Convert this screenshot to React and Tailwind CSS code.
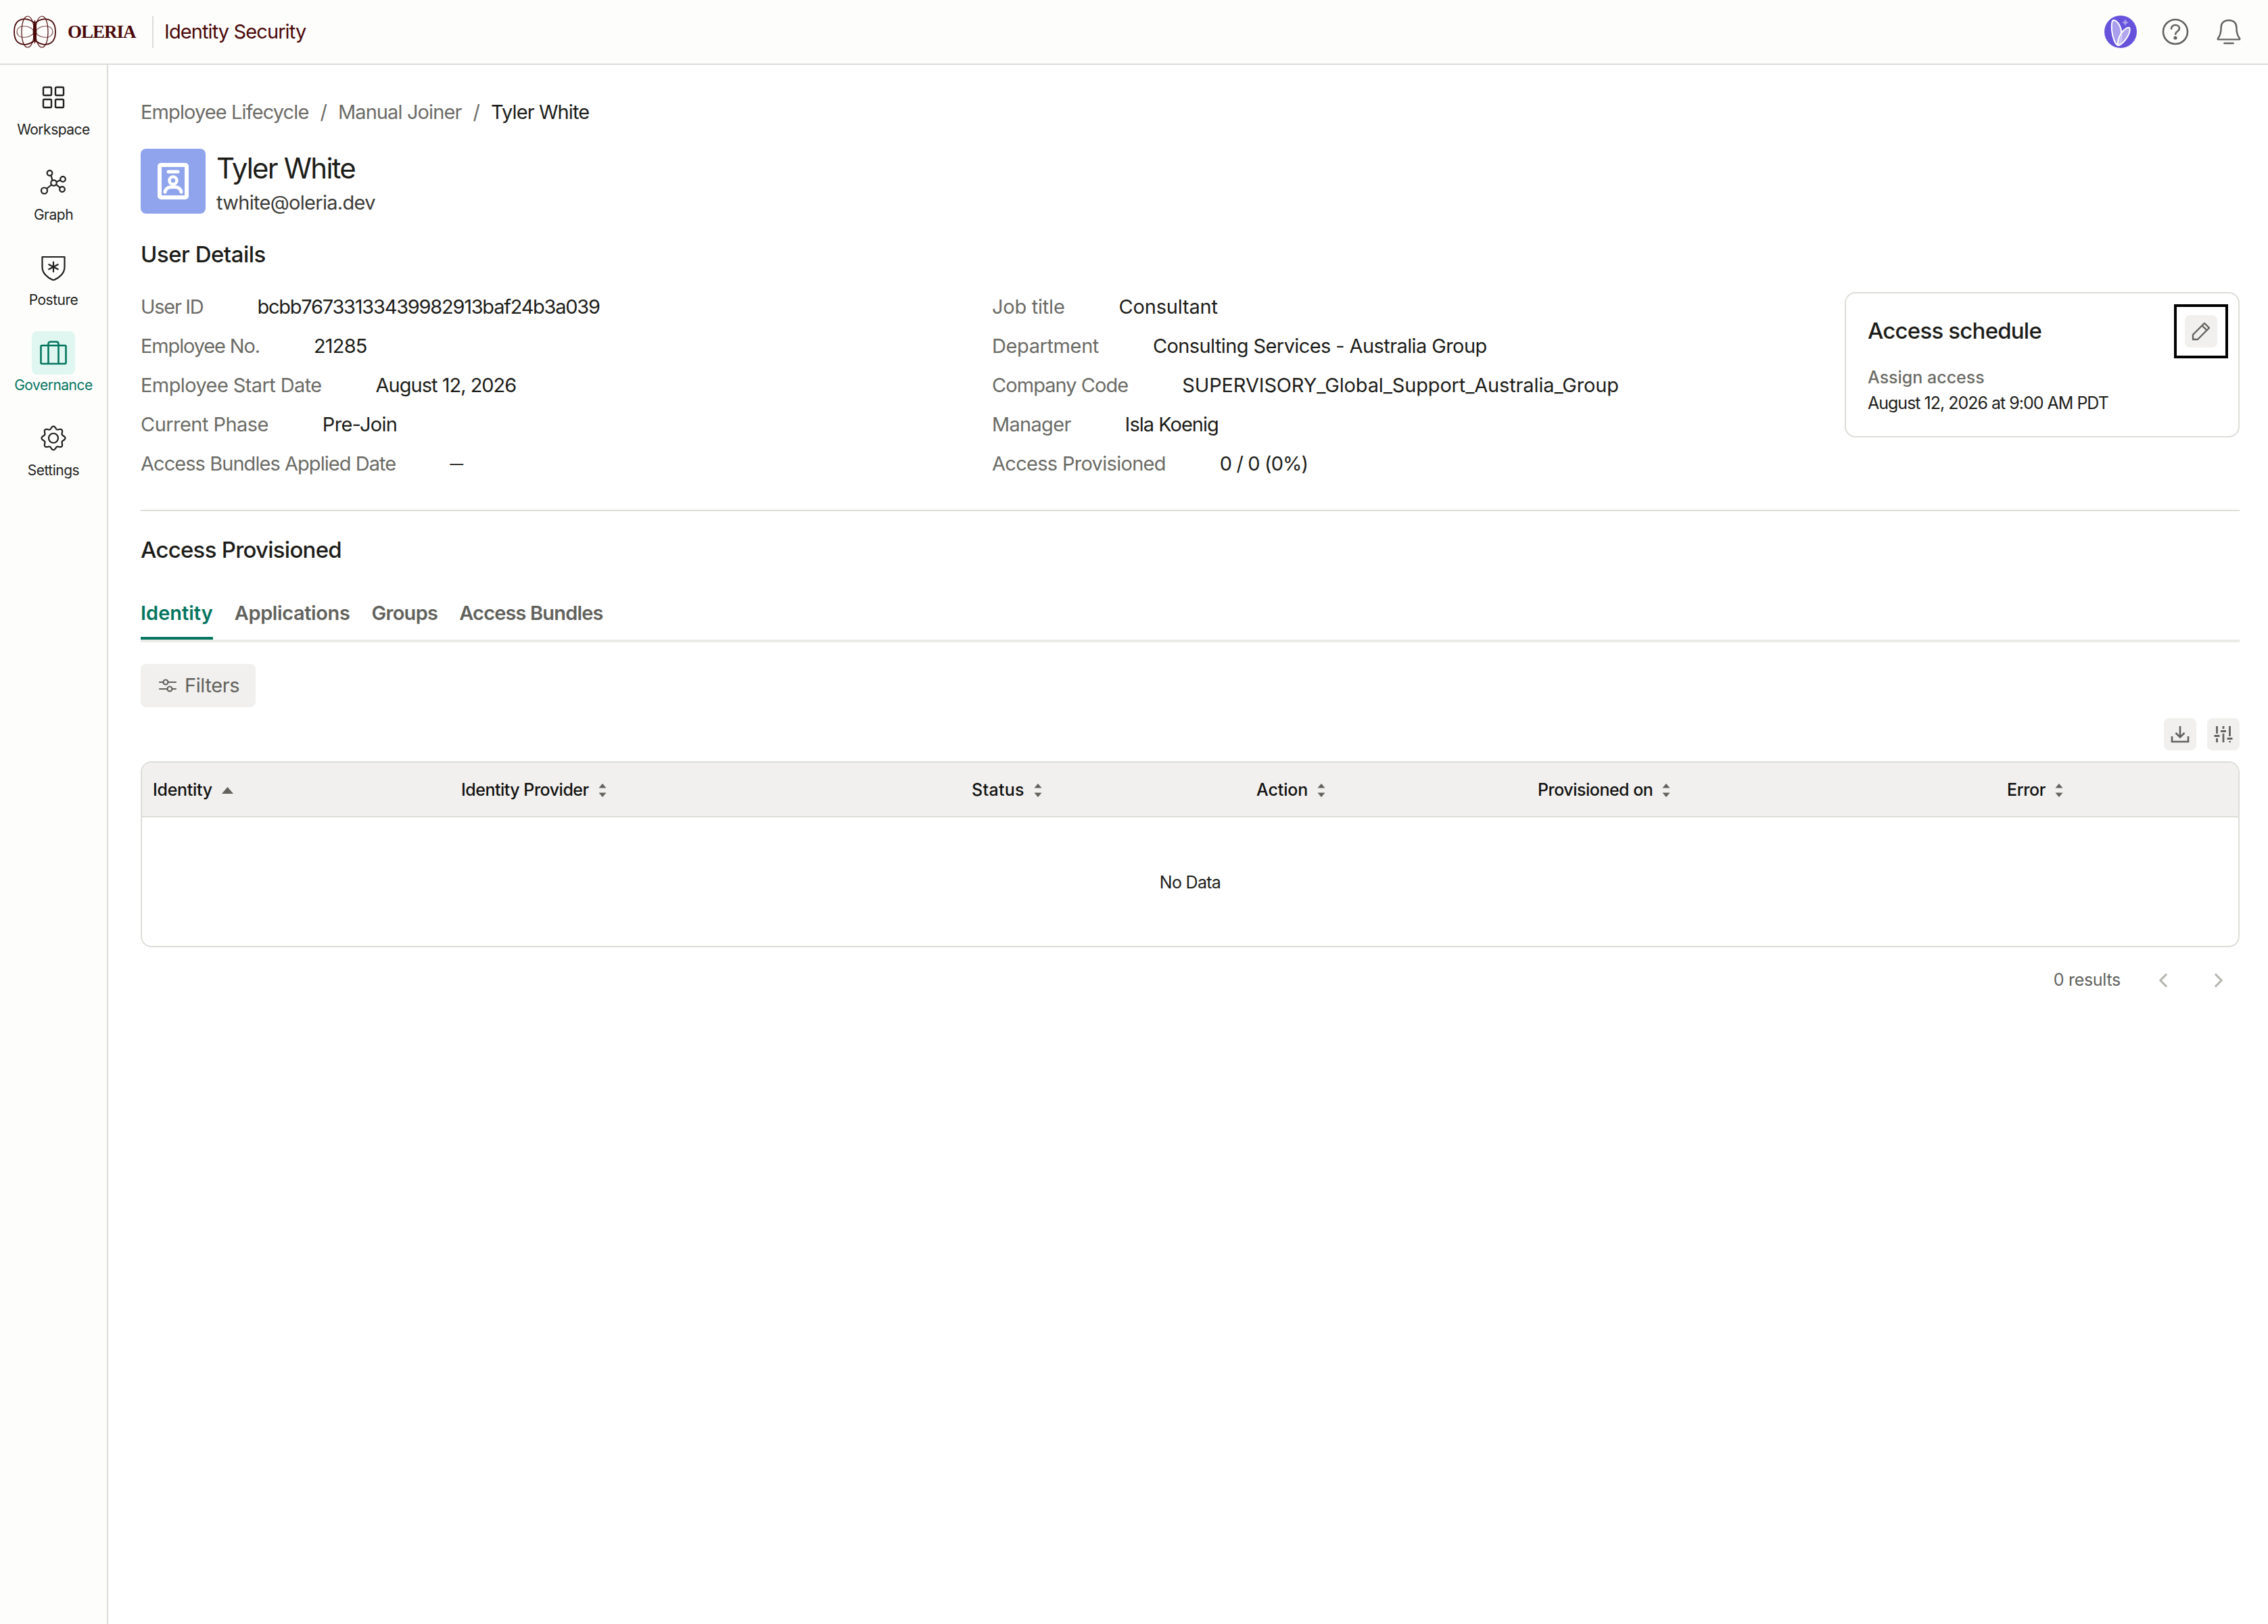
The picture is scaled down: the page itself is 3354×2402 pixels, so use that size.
import React from 'react';
import { ChevronLeft, ChevronRight } from 'lucide-react';

const gearPath = (() => {
  const pts = [];
  for (let i = 0; i < 96; i++) {
    const t = (i / 96) * Math.PI * 2;
    const r = 15.6 + 1.9 * Math.cos(8 * t);
    pts.push(`${(19 + r * Math.sin(t)).toFixed(2)} ${(19 - r * Math.cos(t)).toFixed(2)}`);
  }
  return `M${pts.join('L')}Z`;
})();

const LogoLobes = () => (
  <>
    <path d="M31 11C24 5 14 3 7 8C-1 14 -1 34 7 40C14 45 24 43 31 37" strokeWidth="1.800" />
    <path d="M31 24C30 10 26 1 21 1C15 1 12 12 12 24C12 36 15 47 21 47C26 47 30 38 31 24" />
    <path d="M31 24C27 17 19 15 12 16C7 17 5 21 5 24C5 27 7 31 12 32C19 33 27 31 31 24" opacity="0.75" />
  </>
);

const Logo = () => (
  <svg width="63" height="48" viewBox="0 0 63 48" fill="none" stroke="#4a0808" strokeWidth="1.200">
    <LogoLobes />
    <g transform="matrix(-1 0 0 1 63 0)">
      <LogoLobes />
    </g>
    <path d="M31.500 8C28.500 17 28.500 31 31.500 40C34.500 31 34.500 17 31.500 8Z" fill="#4a0808" />
  </svg>
);

const AiBadge = () => (
  <svg width="48" height="48" viewBox="0 0 48 48">
    <circle cx="24" cy="24" r="24" fill="#6553dc" />
    <path d="M13 7C18 6 24 14 25 23C26 32 25 41 21 44C16 44 12 32 11 22C10.500 15 11 8 13 7Z" fill="#a99fec" stroke="#fff" strokeWidth="2" />
    <path d="M37 18C39 22 36 30 31 36C27 41 22 45 20.500 44C19 40 21 32 25 26C29 21 34 17 37 18Z" fill="#c4bcf3" fillOpacity="0.8" stroke="#fff" strokeWidth="2" />
    <path d="M31 4C31.600 8 33 9.500 36.500 10.200C33 11 31.600 12.500 31 16C30.400 12.500 29 11 25.500 10.200C29 9.500 30.400 8 31 4Z" fill="#a99fec" />
  </svg>
);

const HelpIcon = () => (
  <svg width="40" height="40" viewBox="0 0 40 40" fill="none" stroke="#62625d" strokeWidth="2.600" strokeLinecap="round">
    <circle cx="20" cy="20" r="18" />
    <path d="M14 15.500C14 12 16.800 10 20 10C23.400 10 26 12.200 26 15.200C26 19 20.200 19.500 20.200 23.500" />
    <circle cx="20" cy="29" r="1.300" fill="#62625d" />
  </svg>
);

const BellIcon = () => (
  <svg width="36" height="40" viewBox="0 0 38 40" fill="none" stroke="#62625d" strokeWidth="2.600" strokeLinecap="round" strokeLinejoin="round">
    <path d="M7 13C7 6 12 2 19 2C26 2 31 6 31 13C31 21 32 26 36 30.500C36.500 31.500 36 32 35 32H3C2 32 1.500 31.500 2 30.500C6 26 7 21 7 13Z" />
    <path d="M12 38H26" />
  </svg>
);

const WorkspaceIcon = ({ color }) => (
  <svg width="34" height="34" viewBox="0 0 34 34" fill="none" stroke={color} strokeWidth="2.400">
    <rect x="2" y="2" width="12" height="12" rx="1.500" />
    <rect x="20" y="2" width="12" height="12" rx="1.500" />
    <rect x="2" y="20" width="12" height="12" rx="1.500" />
    <rect x="20" y="20" width="12" height="12" rx="1.500" />
  </svg>
);

const GraphIcon = ({ color }) => (
  <svg width="38" height="38" viewBox="0 0 38 38" fill="none" stroke={color} strokeWidth="2.200">
    <circle cx="13.500" cy="5" r="3.800" />
    <circle cx="33" cy="14" r="3.800" />
    <circle cx="19.500" cy="19.500" r="4.200" />
    <circle cx="32" cy="29" r="3.800" />
    <circle cx="5.500" cy="31" r="4.500" />
    <path d="M15.500 8.500L17.500 15.800M23.500 18L29.300 15.500M23 22L29 26.700M16 22.500L9 28" />
  </svg>
);

const PostureIcon = ({ color }) => (
  <svg width="38" height="38" viewBox="0 0 38 38" fill="none" stroke={color} strokeWidth="2.200" strokeLinejoin="round">
    <path d="M2.500 3H35.500V18C35.500 27 28 34 19 37.500C10 34 2.500 27 2.500 18Z" />
    <path d="M19 10.500V25M12.300 14.200L25.700 21.300M25.700 14.200L12.300 21.300" strokeLinecap="round" />
  </svg>
);

const GovernanceIcon = ({ color }) => (
  <svg width="40" height="36" viewBox="0 0 40 36" fill="none" stroke={color} strokeWidth="2.600" strokeLinejoin="round">
    <rect x="1.500" y="7" width="37" height="27" rx="1.500" />
    <path d="M12.500 7V34M27.500 7V34" />
    <path d="M12.500 7V4.500C12.500 2.500 14 1.500 16 1.500H24C26 1.500 27.500 2.500 27.500 4.500V7" />
  </svg>
);

const SettingsIcon = ({ color }) => (
  <svg width="38" height="38" viewBox="0 0 38 38" fill="none" stroke={color} strokeWidth="2.200" strokeLinejoin="round">
    <path d={gearPath} />
    <circle cx="19" cy="19" r="7" />
  </svg>
);

const IdBadgeIcon = () => (
  <svg width="46" height="54" viewBox="0 0 46 54" fill="none" stroke="#fff" strokeLinecap="round">
    <rect x="3" y="3" width="40" height="48" rx="2" strokeWidth="6" />
    <path d="M16 13H30" strokeWidth="5" />
    <circle cx="23" cy="26" r="5.500" strokeWidth="4.500" />
    <path d="M11 43C12 37 16 35.500 23 35.500C30 35.500 34 37 35 43" strokeWidth="5" />
  </svg>
);

const PencilIcon = () => (
  <svg width="28" height="28" viewBox="0 0 28 28" fill="none" stroke="#62625d" strokeWidth="2.400" strokeLinejoin="round">
    <path d="M2 26V19L19 2L26 9L9 26Z" />
    <path d="M15.500 5.500L22.500 12.500" />
  </svg>
);

const FiltersIcon = () => (
  <svg width="26" height="22" viewBox="0 0 26 22" fill="none" stroke="#62625d" strokeWidth="2.200" strokeLinecap="round">
    <path d="M1 6H6M14 6H25M1 16H12M20 16H25" />
    <circle cx="10" cy="6" r="3.500" />
    <circle cx="16" cy="16" r="3.500" />
  </svg>
);

const DownloadIcon = () => (
  <svg width="28" height="28" viewBox="0 0 28 28" fill="none" stroke="#62625d" strokeWidth="2.600">
    <path d="M14 2V18M7.500 12L14 18.500L20.500 12" />
    <path d="M2 17V25H26V17" />
  </svg>
);

const ColumnsIcon = () => (
  <svg width="28" height="28" viewBox="0 0 28 28" fill="none" stroke="#62625d" strokeWidth="2.800">
    <path d="M4.500 2V13M4.500 20V26M14 2V6M14 13V26M23.500 2V17M23.500 24V26" />
    <path d="M0.500 16.500H8.500M10 9.500H18M19.500 20.500H27.500" />
  </svg>
);

const SortIcon = () => (
  <svg width="12" height="20" viewBox="0 0 12 20" fill="#62625d">
    <path d="M6 0L11.500 6.500H0.500Z" />
    <path d="M6 20L11.500 13.500H0.500Z" />
  </svg>
);

const SortAscIcon = () => (
  <svg width="17" height="10" viewBox="0 0 17 10" fill="#62625d">
    <path d="M8.500 0L17 10H0Z" />
  </svg>
);

const NAV = [
  { label: 'Workspace', icon: WorkspaceIcon },
  { label: 'Graph', icon: GraphIcon },
  { label: 'Posture', icon: PostureIcon },
  { label: 'Governance', icon: GovernanceIcon, active: true },
  { label: 'Settings', icon: SettingsIcon },
];

const LEFT_ROWS = [
  { label: 'User ID', labelClasses: 'tracking-[-1.3px]', value: 'bcbb76733133439982913baf24b3a039', classes: 'tracking-[-1.25px]' },
  { label: 'Employee No.', labelClasses: 'tracking-[-1.15px]', value: '21285', classes: 'tracking-[-0.8px]' },
  { label: 'Employee Start Date', labelClasses: 'tracking-[-0.6px]', value: 'August 12, 2026', classes: 'tracking-[-1px]' },
  { label: 'Current Phase', labelClasses: 'tracking-[-0.55px]', value: 'Pre-Join' },
  { label: 'Access Bundles Applied Date', labelClasses: 'tracking-[-0.95px]', value: '—', classes: 'text-[20px]' },
];

const RIGHT_ROWS = [
  { label: 'Job title', labelClasses: 'tracking-[-0.25px]', value: 'Consultant', classes: 'tracking-[-0.2px]' },
  { label: 'Department', labelClasses: 'tracking-[-0.4px]', value: 'Consulting Services - Australia Group', classes: 'tracking-[-0.6px]' },
  { label: 'Company Code', labelClasses: 'tracking-[-0.95px]', value: 'SUPERVISORY_Global_Support_Australia_Group', classes: 'tracking-[-0.15px]' },
  { label: 'Manager', value: 'Isla Koenig', classes: 'tracking-[-1px]' },
  { label: 'Access Provisioned', value: '0 / 0 (0%)', classes: 'tracking-[-0.9px]' },
];

const TABS = [
  { label: 'Identity', classes: 'tracking-[0px] border-[#03755f] text-[#03755f]' },
  { label: 'Applications', classes: 'tracking-[-0.4px] border-transparent text-[#62625d]' },
  { label: 'Groups', classes: 'tracking-[-0.7px] border-transparent text-[#62625d]' },
  { label: 'Access Bundles', classes: 'tracking-[-0.85px] border-transparent text-[#62625d]' },
];

const COLUMNS = [
  { label: 'Identity', classes: 'tracking-[-0.3px]' },
  { label: 'Identity Provider', classes: 'tracking-[-0.5px]' },
  { label: 'Status', classes: 'tracking-[0.3px]' },
  { label: 'Action', classes: 'tracking-[-0.1px]' },
  { label: 'Provisioned on', classes: 'tracking-[-0.5px]' },
  { label: 'Error', classes: 'tracking-[-0.4px]' },
];

const DetailColumn = ({ rows, classes }) => (
  <div className={classes}>
    {rows.map(({ label, labelClasses, value, classes: valueClasses }) => (
      <div key={label} className="flex h-[58px] items-center gap-20 text-[29px] tracking-[-0.7px]">
        <span className={`text-[#6b6b66] ${labelClasses || ''}`}>{label}</span>
        <span className={`text-[#1c1c19] ${valueClasses || ''}`}>{value}</span>
      </div>
    ))}
  </div>
);

const Header = () => (
  <header className="flex h-[96px] shrink-0 items-center justify-between border-b-2 border-[#dcdcd8] bg-[#fdfdfc] pl-5 pr-10">
    <div className="flex items-center">
      <Logo />
      <span className="ml-[17px] w-[103px] font-['Liberation_Serif',serif] text-[27px] font-bold leading-none tracking-[-1px] text-[#4a0808]">OLERIA</span>
      <div className="ml-[22px] h-[47px] w-0.5 bg-[#dcdcd8]" />
      <span className="ml-4 text-[29px] tracking-[-0.9px] text-[#4a0808]">Identity Security</span>
    </div>
    <div className="flex items-center">
      <AiBadge />
      <div className="ml-[37px]"><HelpIcon /></div>
      <div className="ml-[41px]"><BellIcon /></div>
    </div>
  </header>
);

const Sidebar = () => (
  <nav className="flex w-[160px] shrink-0 flex-col items-center border-r-2 border-[#dcdcd8] bg-[#fdfdfc] pt-4">
    {NAV.map(({ label, icon: Icon, active }) => (
      <div key={label} className="flex h-[126px] w-full flex-col items-center">
        <div className={`flex h-16 w-16 items-center justify-center rounded-lg ${active ? 'bg-[#dff7f0]' : ''}`}>
          <Icon color={active ? '#03755f' : '#1f1f1c'} />
        </div>
        <span className={`mt-0.5 text-[21px] leading-7 tracking-[-0.5px] ${active ? 'text-[#03755f]' : 'text-[#1f1f1c]'}`}>{label}</span>
      </div>
    ))}
  </nav>
);

const AccessScheduleCard = () => (
  <div className="mt-[7px] flex h-[215px] w-[584px] shrink-0 flex-col rounded-2xl border-2 border-[#dcdcd8] pl-8 pr-[31px]">
    <div className="mt-[32px] flex h-12 items-center justify-between">
      <span className="text-[33px] font-medium tracking-[-0.8px] text-[#1c1c19]">Access schedule</span>
      <div className="outline-4 outline-offset-12 outline-black">
        <button className="flex h-12 w-12 items-center justify-center rounded-lg bg-[#f1f0ee]">
          <PencilIcon />
        </button>
      </div>
    </div>
    <span className="mt-[28px] text-[25px] leading-8 font-medium text-[#6b6b66]">Assign access</span>
    <span className="mt-1.5 text-[25px] leading-8 tracking-[-1px] text-[#1c1c19]">August 12, 2026 at 9:00 AM PDT</span>
  </div>
);

const Tabs = () => (
  <div className="mt-[52px] flex gap-8 border-b-4 border-[#eaeae7] text-[29px] font-semibold">
    {TABS.map(({ label, classes }) => (
      <div key={label} className={`h-[59px] border-b-4 pb-[15px] leading-10 ${classes}`}>
        {label}
      </div>
    ))}
  </div>
);

const DataTable = () => (
  <div className="mt-4 h-[275px] overflow-hidden rounded-2xl border-2 border-[#dcdcd8]">
    <div className="grid h-[81px] grid-cols-[456px_755px_421px_416px_694px_357px] border-b-2 border-[#dcdcd8] bg-[#f1f0ee]">
      {COLUMNS.map(({ label, classes }, i) => (
        <div key={label} className={`flex items-center gap-[14px] pl-4 pt-0.5 text-[25px] font-medium text-[#111110] ${classes}`}>
          {label}
          {i === 0 ? <SortAscIcon /> : <SortIcon />}
        </div>
      ))}
    </div>
    <div className="flex h-[190px] items-center justify-center pt-1 text-[25px] tracking-[-0.7px] text-[#1c1c19]">No Data</div>
  </div>
);

const App = () => (
  <div className="flex h-screen flex-col bg-white font-['Inter',sans-serif]">
    <Header />
    <div className="flex min-h-0 flex-1">
      <Sidebar />
      <main className="min-w-0 flex-1 pl-12 pr-[42px] pt-[50px]">
        <div className="flex h-10 items-center gap-[17px] text-[29px] tracking-[-0.9px] text-[#6b6b66]">
          <span>Employee Lifecycle</span>
          <span>/</span>
          <span>Manual Joiner</span>
          <span>/</span>
          <span className="text-[#1c1c19]">Tyler White</span>
        </div>

        <div className="mt-[34px] flex gap-4">
          <div className="flex h-24 w-24 items-center justify-center rounded-lg bg-[#8fa4ec]">
            <IdBadgeIcon />
          </div>
          <div className="h-24">
            <div className="mt-0.5 text-[42px] leading-[54px] tracking-[-1.8px] text-[#1c1c19]">Tyler White</div>
            <div className="mt-2 text-[29px] leading-8 tracking-[-0.7px] text-[#3c3c38]">twhite@oleria.dev</div>
          </div>
        </div>

        <h2 className="mt-[38px] text-[33px] leading-11 font-medium tracking-[-0.5px] text-[#1c1c19]">User Details</h2>

        <div className="mt-[27px] flex border-b-2 border-[#dcdcd8] pb-[39px]">
          <DetailColumn rows={LEFT_ROWS} classes="w-[1259px] shrink-0" />
          <DetailColumn rows={RIGHT_ROWS} classes="w-[1261px] shrink-0" />
          <AccessScheduleCard />
        </div>

        <h2 className="mt-[35px] text-[33px] leading-11 font-medium tracking-[-0.75px] text-[#1c1c19]">Access Provisioned</h2>

        <Tabs />

        <button className="mt-8 flex h-16 w-[170px] items-center gap-3 rounded-lg bg-[#f1f0ee] pl-[27px] text-[29px] tracking-[-0.4px] text-[#62625d]">
          <FiltersIcon />
          Filters
        </button>

        <div className="mt-4 flex justify-end gap-4">
          <button className="flex h-12 w-12 items-center justify-center rounded-lg bg-[#f1f0ee]"><DownloadIcon /></button>
          <button className="flex h-12 w-12 items-center justify-center rounded-lg bg-[#f1f0ee]"><ColumnsIcon /></button>
        </div>

        <DataTable />

        <div className="mt-[30px] flex items-center justify-end text-[25px] tracking-[-0.3px] text-[#62625d]">
          <span>0 results</span>
          <ChevronLeft className="ml-[46px] text-[#b5b5af]" size={34} strokeWidth={2.2} />
          <ChevronRight className="ml-12 mr-[14px] text-[#b5b5af]" size={34} strokeWidth={2.2} />
        </div>
      </main>
    </div>
  </div>
);

export default App;
